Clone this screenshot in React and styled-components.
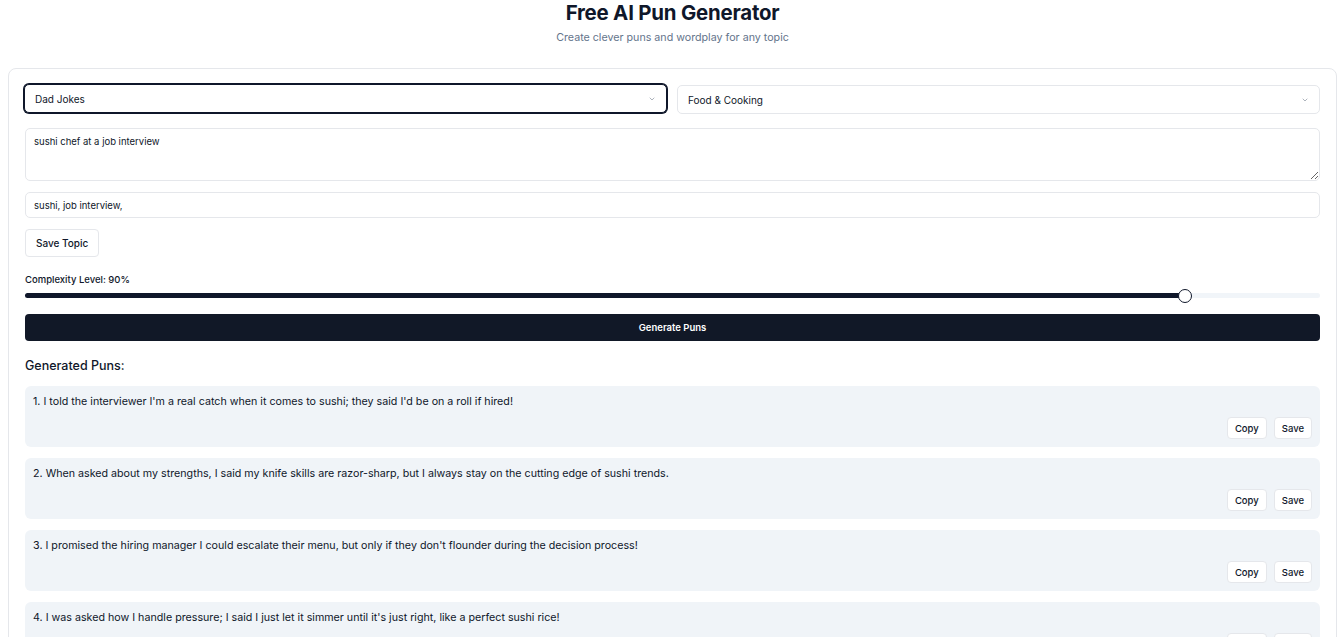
import React, { useState } from "react";
import styled, { createGlobalStyle } from "styled-components";

const GlobalStyle = createGlobalStyle`
  body {
    margin: 0;
    background: #ffffff;
    font-family: Inter, "Noto Sans", sans-serif;
    color: #0f172a;
  }
  * { box-sizing: border-box; }
`;

const Page = styled.div`
  padding: 0 3px 0 8px;
`;

const Header = styled.header`
  text-align: center;
  margin-bottom: 23px;
`;

const Title = styled.h1`
  margin: 0;
  font-size: 20.4px;
  line-height: 26px;
  font-weight: 700;
  letter-spacing: -0.2px;
`;

const Subtitle = styled.p`
  margin: 5px 0 0;
  font-size: 10.7px;
  line-height: 14px;
  color: #64748b;
`;

const Card = styled.div`
  border: 1px solid #e5e7eb;
  border-radius: 8px;
  padding: 15px 16px;
  display: flex;
  flex-direction: column;
`;

const SelectRow = styled.div`
  display: grid;
  grid-template-columns: 1fr 1fr;
  gap: 10px;
  margin: 0 0 13px -1px;
`;

const SelectBox = styled.div`
  height: 29px;
  display: flex;
  align-items: center;
  justify-content: space-between;
  padding: 0 10px;
  font-size: 10px;
  border: 1px solid #e5e7eb;
  border-radius: 5px;
  background: #fff;
  box-shadow: ${(p) => (p.$focused ? "0 0 0 1px #0f172a" : "none")};
  border-color: ${(p) => (p.$focused ? "#0f172a" : "#e5e7eb")};
  margin: ${(p) => (p.$focused ? "0" : "1px 0")};
`;

const TextArea = styled.textarea`
  display: block;
  width: 100%;
  height: 53px;
  resize: vertical;
  font-family: inherit;
  font-size: 9.5px;
  color: #0f172a;
  padding: 7px 8px;
  border: 1px solid #e5e7eb;
  border-radius: 5px;
  margin: 0 0 11px;
  outline: none;
`;

const TextInput = styled.input`
  display: block;
  width: 100%;
  height: 26px;
  font-family: inherit;
  font-size: 9.5px;
  color: #0f172a;
  padding: 0 8px;
  border: 1px solid #e5e7eb;
  border-radius: 5px;
  margin: 0 0 11px;
  outline: none;
`;

const OutlineButton = styled.button`
  font-family: inherit;
  font-size: ${(p) => (p.$small ? "9.5px" : "10px")};
  font-weight: 500;
  color: #0f172a;
  background: #fff;
  border: 1px solid #e5e7eb;
  border-radius: 4px;
  height: ${(p) => (p.$small ? "22px" : "28px")};
  padding: 0 ${(p) => (p.$small ? "7px" : "10px")};
  cursor: pointer;
`;

const SaveRow = styled.div`
  margin-bottom: 17px;
`;

const Label = styled.div`
  font-size: 9.5px;
  font-weight: 500;
  margin-bottom: 8px;
`;

const Track = styled.div`
  position: relative;
  height: 5px;
  border-radius: 3px;
  background: #f1f5f9;
  margin-bottom: 16px;
`;

const Fill = styled.div`
  height: 100%;
  border-radius: 3px;
  background: #0f172a;
`;

const Thumb = styled.div`
  position: absolute;
  top: 50%;
  width: 14px;
  height: 14px;
  margin: -7px 0 0 -7px;
  border-radius: 50%;
  background: #fff;
  border: 1.5px solid #0f172a;
`;

const PrimaryButton = styled.button`
  width: 100%;
  height: 27px;
  background: #111827;
  color: #fff;
  border: none;
  border-radius: 4px;
  font-family: inherit;
  font-size: 9.5px;
  font-weight: 600;
  margin-bottom: 17px;
`;

const SectionTitle = styled.h2`
  margin: 0 0 13px;
  font-size: 12.5px;
  font-weight: 500;
`;

const PunList = styled.div`
  display: flex;
  flex-direction: column;
  gap: 11px;
`;

const PunCard = styled.div`
  background: #f0f4f8;
  border-radius: 6px;
  padding: 9px 8px 8px 8px;
  height: 61px;
  display: flex;
  flex-direction: column;
  justify-content: space-between;
`;

const PunText = styled.p`
  margin: 0;
  font-size: 10.7px;
  line-height: 14px;
`;

const Actions = styled.div`
  display: flex;
  justify-content: flex-end;
  gap: 7px;
`;

const Chevron = () => (
  <svg width="8" height="8" viewBox="0 0 24 24" fill="none" stroke="#9ca3af" strokeWidth="2.5" strokeLinecap="round" strokeLinejoin="round">
    <path d="m6 9 6 6 6-6" />
  </svg>
);

const puns = [
  "I told the interviewer I'm a real catch when it comes to sushi; they said I'd be on a roll if hired!",
  "When asked about my strengths, I said my knife skills are razor-sharp, but I always stay on the cutting edge of sushi trends.",
  "I promised the hiring manager I could escalate their menu, but only if they don't flounder during the decision process!",
  "I was asked how I handle pressure; I said I just let it simmer until it's just right, like a perfect sushi rice!",
];

export default function App() {
  const [level] = useState(90);
  // keep the thumb inside the track, as a slider would
  const thumbLeft = `calc(${level}% + ${((50 - level) / 100) * 14}px)`;
  return (
    <Page>
      <GlobalStyle />
      <Header>
        <Title>Free AI Pun Generator</Title>
        <Subtitle>Create clever puns and wordplay for any topic</Subtitle>
      </Header>
      <Card>
        <SelectRow>
          <SelectBox $focused>
            <span>Dad Jokes</span>
            <Chevron />
          </SelectBox>
          <SelectBox>
            <span>Food &amp; Cooking</span>
            <Chevron />
          </SelectBox>
        </SelectRow>
        <TextArea defaultValue="sushi chef at a job interview" />
        <TextInput defaultValue="sushi, job interview," />
        <SaveRow>
          <OutlineButton>Save Topic</OutlineButton>
        </SaveRow>
        <Label>Complexity Level: {level}%</Label>
        <Track>
          <Fill style={{ width: thumbLeft }} />
          <Thumb style={{ left: thumbLeft }} />
        </Track>
        <PrimaryButton>Generate Puns</PrimaryButton>
        <SectionTitle>Generated Puns:</SectionTitle>
        <PunList>
          {puns.map((p, i) => (
            <PunCard key={i}>
              <PunText>
                {i + 1}. {p}
              </PunText>
              <Actions>
                <OutlineButton $small>Copy</OutlineButton>
                <OutlineButton $small>Save</OutlineButton>
              </Actions>
            </PunCard>
          ))}
        </PunList>
      </Card>
    </Page>
  );
}
